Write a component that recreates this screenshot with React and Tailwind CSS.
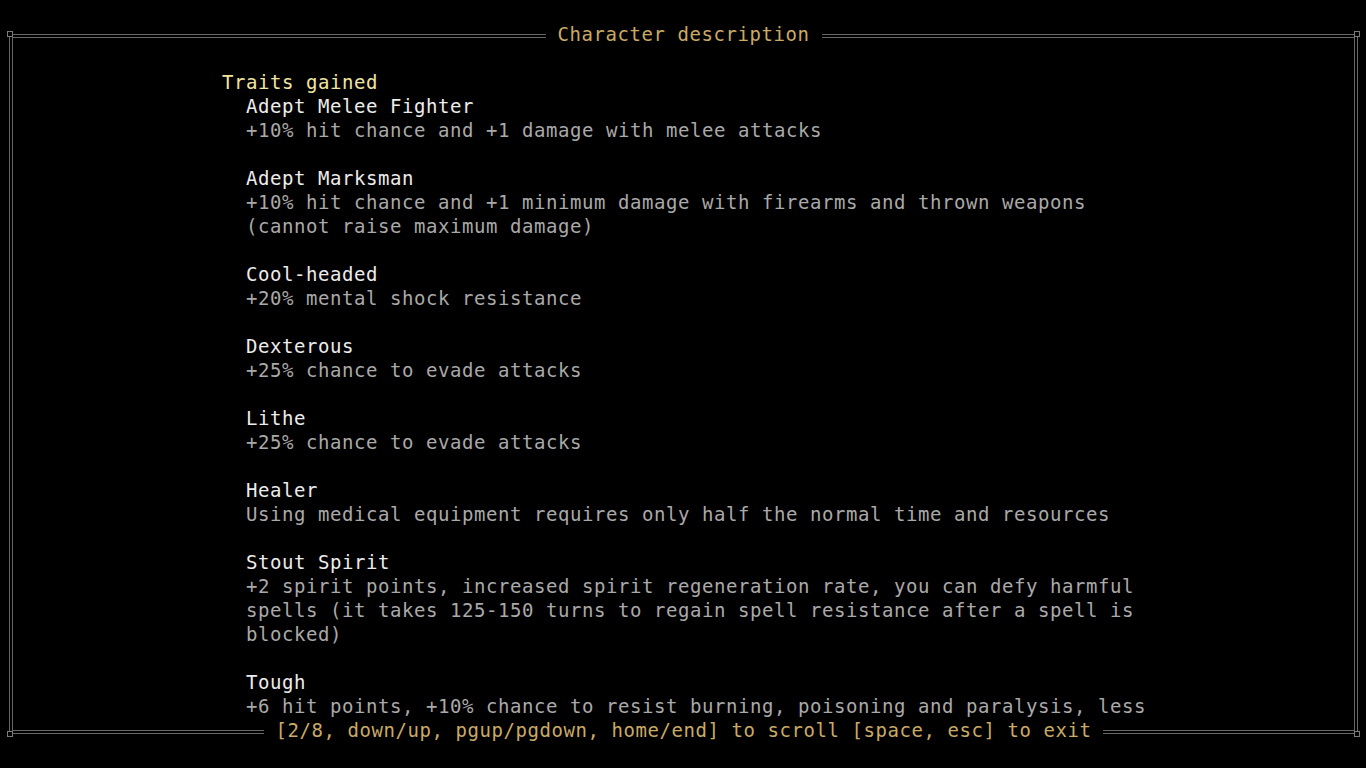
import React from "react";

const lines = [
  { t: "Traits gained", c: "y", i: 0 },
  { t: "Adept Melee Fighter", c: "w", i: 1 },
  { t: "+10% hit chance and +1 damage with melee attacks", c: "g", i: 1 },
  { t: "", c: "g", i: 1 },
  { t: "Adept Marksman", c: "w", i: 1 },
  { t: "+10% hit chance and +1 minimum damage with firearms and thrown weapons", c: "g", i: 1 },
  { t: "(cannot raise maximum damage)", c: "g", i: 1 },
  { t: "", c: "g", i: 1 },
  { t: "Cool-headed", c: "w", i: 1 },
  { t: "+20% mental shock resistance", c: "g", i: 1 },
  { t: "", c: "g", i: 1 },
  { t: "Dexterous", c: "w", i: 1 },
  { t: "+25% chance to evade attacks", c: "g", i: 1 },
  { t: "", c: "g", i: 1 },
  { t: "Lithe", c: "w", i: 1 },
  { t: "+25% chance to evade attacks", c: "g", i: 1 },
  { t: "", c: "g", i: 1 },
  { t: "Healer", c: "w", i: 1 },
  { t: "Using medical equipment requires only half the normal time and resources", c: "g", i: 1 },
  { t: "", c: "g", i: 1 },
  { t: "Stout Spirit", c: "w", i: 1 },
  { t: "+2 spirit points, increased spirit regeneration rate, you can defy harmful", c: "g", i: 1 },
  { t: "spells (it takes 125-150 turns to regain spell resistance after a spell is", c: "g", i: 1 },
  { t: "blocked)", c: "g", i: 1 },
  { t: "", c: "g", i: 1 },
  { t: "Tough", c: "w", i: 1 },
  { t: "+6 hit points, +10% chance to resist burning, poisoning and paralysis, less", c: "g", i: 1 },
];

const colorClass = {
  y: "text-[#f0e6a2]",
  w: "text-[#ececec]",
  g: "text-[#a9a9a9]",
};

function Corner() {
  return <div className="w-[6px] h-[6px] shrink-0 border border-[#7a7a7a] bg-black" />;
}

function HLine() {
  return <div className="flex-1 h-[4px] mt-[12px] border-y border-[#666666]" />;
}

function SideColumn({ left }) {
  return (
    <div className="w-[6px] shrink-0 flex flex-col py-[31px]">
      <Corner />
      <div className={`flex-1 w-[4px] border-x border-[#666666] ${left ? "ml-[2px]" : "ml-0"}`} />
      <Corner />
    </div>
  );
}

export default function App() {
  return (
    <div
      className="w-full h-screen bg-black flex pl-[7px] overflow-hidden text-[19px] leading-[24px] tracking-[0.56px]"
      style={{ fontFamily: '"DejaVu Sans Mono", "Liberation Mono", monospace' }}
    >
      <SideColumn left />
      <div className="w-[1341px] shrink-0 flex flex-col pt-[22px]">
        <div className="flex h-[24px] items-start">
          <HLine />
          <span className="px-3 whitespace-pre text-[#c9aa66]">Character description</span>
          <HLine />
        </div>
        <div className="h-[24px]" />
        <div className="flex flex-col pl-[209px]">
          {lines.map((l, k) => (
            <div
              key={k}
              className={`h-[24px] whitespace-pre ${colorClass[l.c]} ${l.i ? "pl-[24px]" : ""}`}
            >
              {l.t}
            </div>
          ))}
        </div>
        <div className="flex h-[24px] items-start">
          <HLine />
          <span className="px-3 whitespace-pre text-[#c9aa66]">
            [2/8, down/up, pgup/pgdown, home/end] to scroll [space, esc] to exit
          </span>
          <HLine />
        </div>
      </div>
      <SideColumn />
    </div>
  );
}
